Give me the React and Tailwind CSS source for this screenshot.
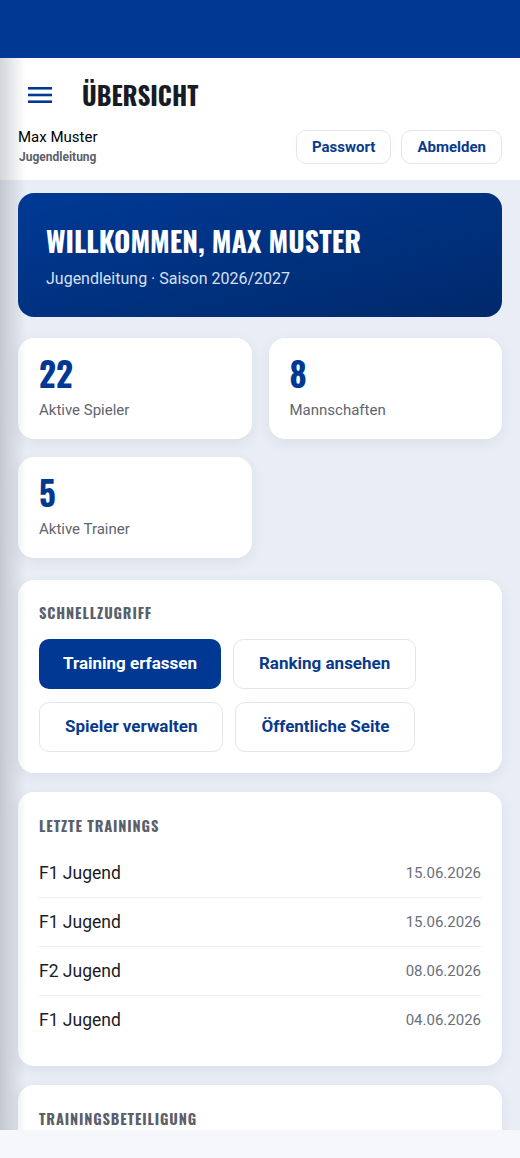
const HEAD = { fontFamily: '"Oswald", "Liberation Sans Narrow", "DejaVu Sans Condensed", sans-serif' }

const STATS = [
  { value: '22', label: 'Aktive Spieler' },
  { value: '8', label: 'Mannschaften' },
  { value: '5', label: 'Aktive Trainer' },
]

const TRAININGS = [
  { team: 'F1 Jugend', date: '15.06.2026' },
  { team: 'F1 Jugend', date: '15.06.2026' },
  { team: 'F2 Jugend', date: '08.06.2026' },
  { team: 'F1 Jugend', date: '04.06.2026' },
]

function Card({ children, className = '' }) {
  return (
    <div className={`bg-white rounded-2xl shadow-[0_4px_14px_rgba(20,40,90,0.07)] ${className}`}>
      {children}
    </div>
  )
}

function SectionTitle({ children }) {
  return (
    <h2 style={HEAD} className="text-[14.5px] font-bold tracking-[0.06em] text-[#5a5f6b] uppercase leading-none">
      {children}
    </h2>
  )
}

export default function App() {
  return (
    <div className="relative w-[520px] h-[1158px] overflow-hidden bg-[#e9edf5]" style={{ fontFamily: 'Roboto, "Liberation Sans", sans-serif' }}>
      <div className="h-[58px] bg-[#003893]" />

      {/* header */}
      <header className="bg-white h-[122px] px-[18px]">
        <div className="flex items-center gap-[30px] pl-[10px] pt-[24px]">
          <svg width="24" height="18" viewBox="0 0 24 18">
            <rect x="0" y="1" width="24" height="2.6" fill="#003893" />
            <rect x="0" y="7.7" width="24" height="2.6" fill="#003893" />
            <rect x="0" y="14.4" width="24" height="2.6" fill="#003893" />
          </svg>
          <h1 style={HEAD} className="text-[25px] font-bold text-[#161b26] leading-none">ÜBERSICHT</h1>
        </div>
        <div className="flex items-start justify-between mt-[11px]">
          <div>
            <div className="text-[15px] text-black leading-[18px] pt-[10px]">Max Muster</div>
            <div className="text-[12px] font-bold text-[#5a5f6b] leading-[14px] mt-[4px] ml-[1px]">Jugendleitung</div>
          </div>
          <div className="flex gap-[10px] mt-[12px]">
            <button className="h-[34px] px-[15px] rounded-[10px] border border-[#e2e6ee] bg-white text-[15px] font-bold text-[#0a3a8c]">Passwort</button>
            <button className="h-[34px] px-[15px] rounded-[10px] border border-[#e2e6ee] bg-white text-[15px] font-bold text-[#0a3a8c]">Abmelden</button>
          </div>
        </div>
      </header>

      <main className="px-[18px] pt-[13px] flex flex-col gap-[19px]">
        {/* welcome */}
        <div className="h-[124px] rounded-2xl bg-gradient-to-br from-[#003a96] to-[#00296b] px-[28px] pt-[34px]">
          <div style={HEAD} className="text-[28px] font-bold text-white leading-none">WILLKOMMEN, MAX MUSTER</div>
          <div className="text-[16px] text-[#d6e0f5] mt-[16px] leading-none">Jugendleitung · Saison 2026/2027</div>
        </div>

        {/* stats */}
        <div className="grid grid-cols-2 gap-x-[17px] gap-y-[18px] mt-[2px]">
          {STATS.map((s) => (
            <Card key={s.label} className="h-[101px] px-[21px] pt-[19px]">
              <div style={HEAD} className="text-[33px] font-bold text-[#003893] leading-none">{s.value}</div>
              <div className="text-[15px] text-[#5f6470] mt-[13px] leading-none">{s.label}</div>
            </Card>
          ))}
        </div>

        {/* quick access */}
        <Card className="px-[21px] pt-[26px] pb-[21px] mt-[3px]">
          <SectionTitle>Schnellzugriff</SectionTitle>
          <div className="flex flex-wrap gap-x-[12px] gap-y-[13px] mt-[18px] w-[385px]">
            <button className="h-[50px] px-[24px] rounded-[10px] bg-[#003893] text-white text-[17px] font-bold">Training erfassen</button>
            <button className="h-[50px] px-[25px] rounded-[10px] border border-[#e2e6ee] bg-white text-[#0a3a8c] text-[17px] font-bold">Ranking ansehen</button>
            <button className="h-[50px] px-[25px] rounded-[10px] border border-[#e2e6ee] bg-white text-[#0a3a8c] text-[17px] font-bold">Spieler verwalten</button>
            <button className="h-[50px] px-[25px] rounded-[10px] border border-[#e2e6ee] bg-white text-[#0a3a8c] text-[17px] font-bold">Öffentliche Seite</button>
          </div>
        </Card>

        {/* latest trainings */}
        <Card className="px-[21px] pt-[27px] pb-[21px]">
          <SectionTitle>Letzte Trainings</SectionTitle>
          <ul className="mt-[16px]">
            {TRAININGS.map((t, i) => (
              <li key={i} className={`flex items-center justify-between h-[49px] ${i < TRAININGS.length - 1 ? 'border-b border-[#eceef2]' : ''}`}>
                <span className="text-[17.5px] text-[#1a1c22]">{t.team}</span>
                <span className="text-[15px] text-[#6a6f7a]">{t.date}</span>
              </li>
            ))}
          </ul>
        </Card>

        <Card className="h-[120px] px-[21px] pt-[27px]">
          <SectionTitle>Trainingsbeteiligung</SectionTitle>
        </Card>
      </main>

      {/* bottom bar */}
      <div className="absolute left-0 right-0 bottom-0 h-[28px] bg-[#f6f7fa]" />
      {/* drawer edge shadow */}
      <div className="absolute left-0 top-[58px] bottom-[28px] w-[26px] bg-gradient-to-r from-[rgba(60,65,80,0.22)] to-transparent pointer-events-none" />
    </div>
  )
}
